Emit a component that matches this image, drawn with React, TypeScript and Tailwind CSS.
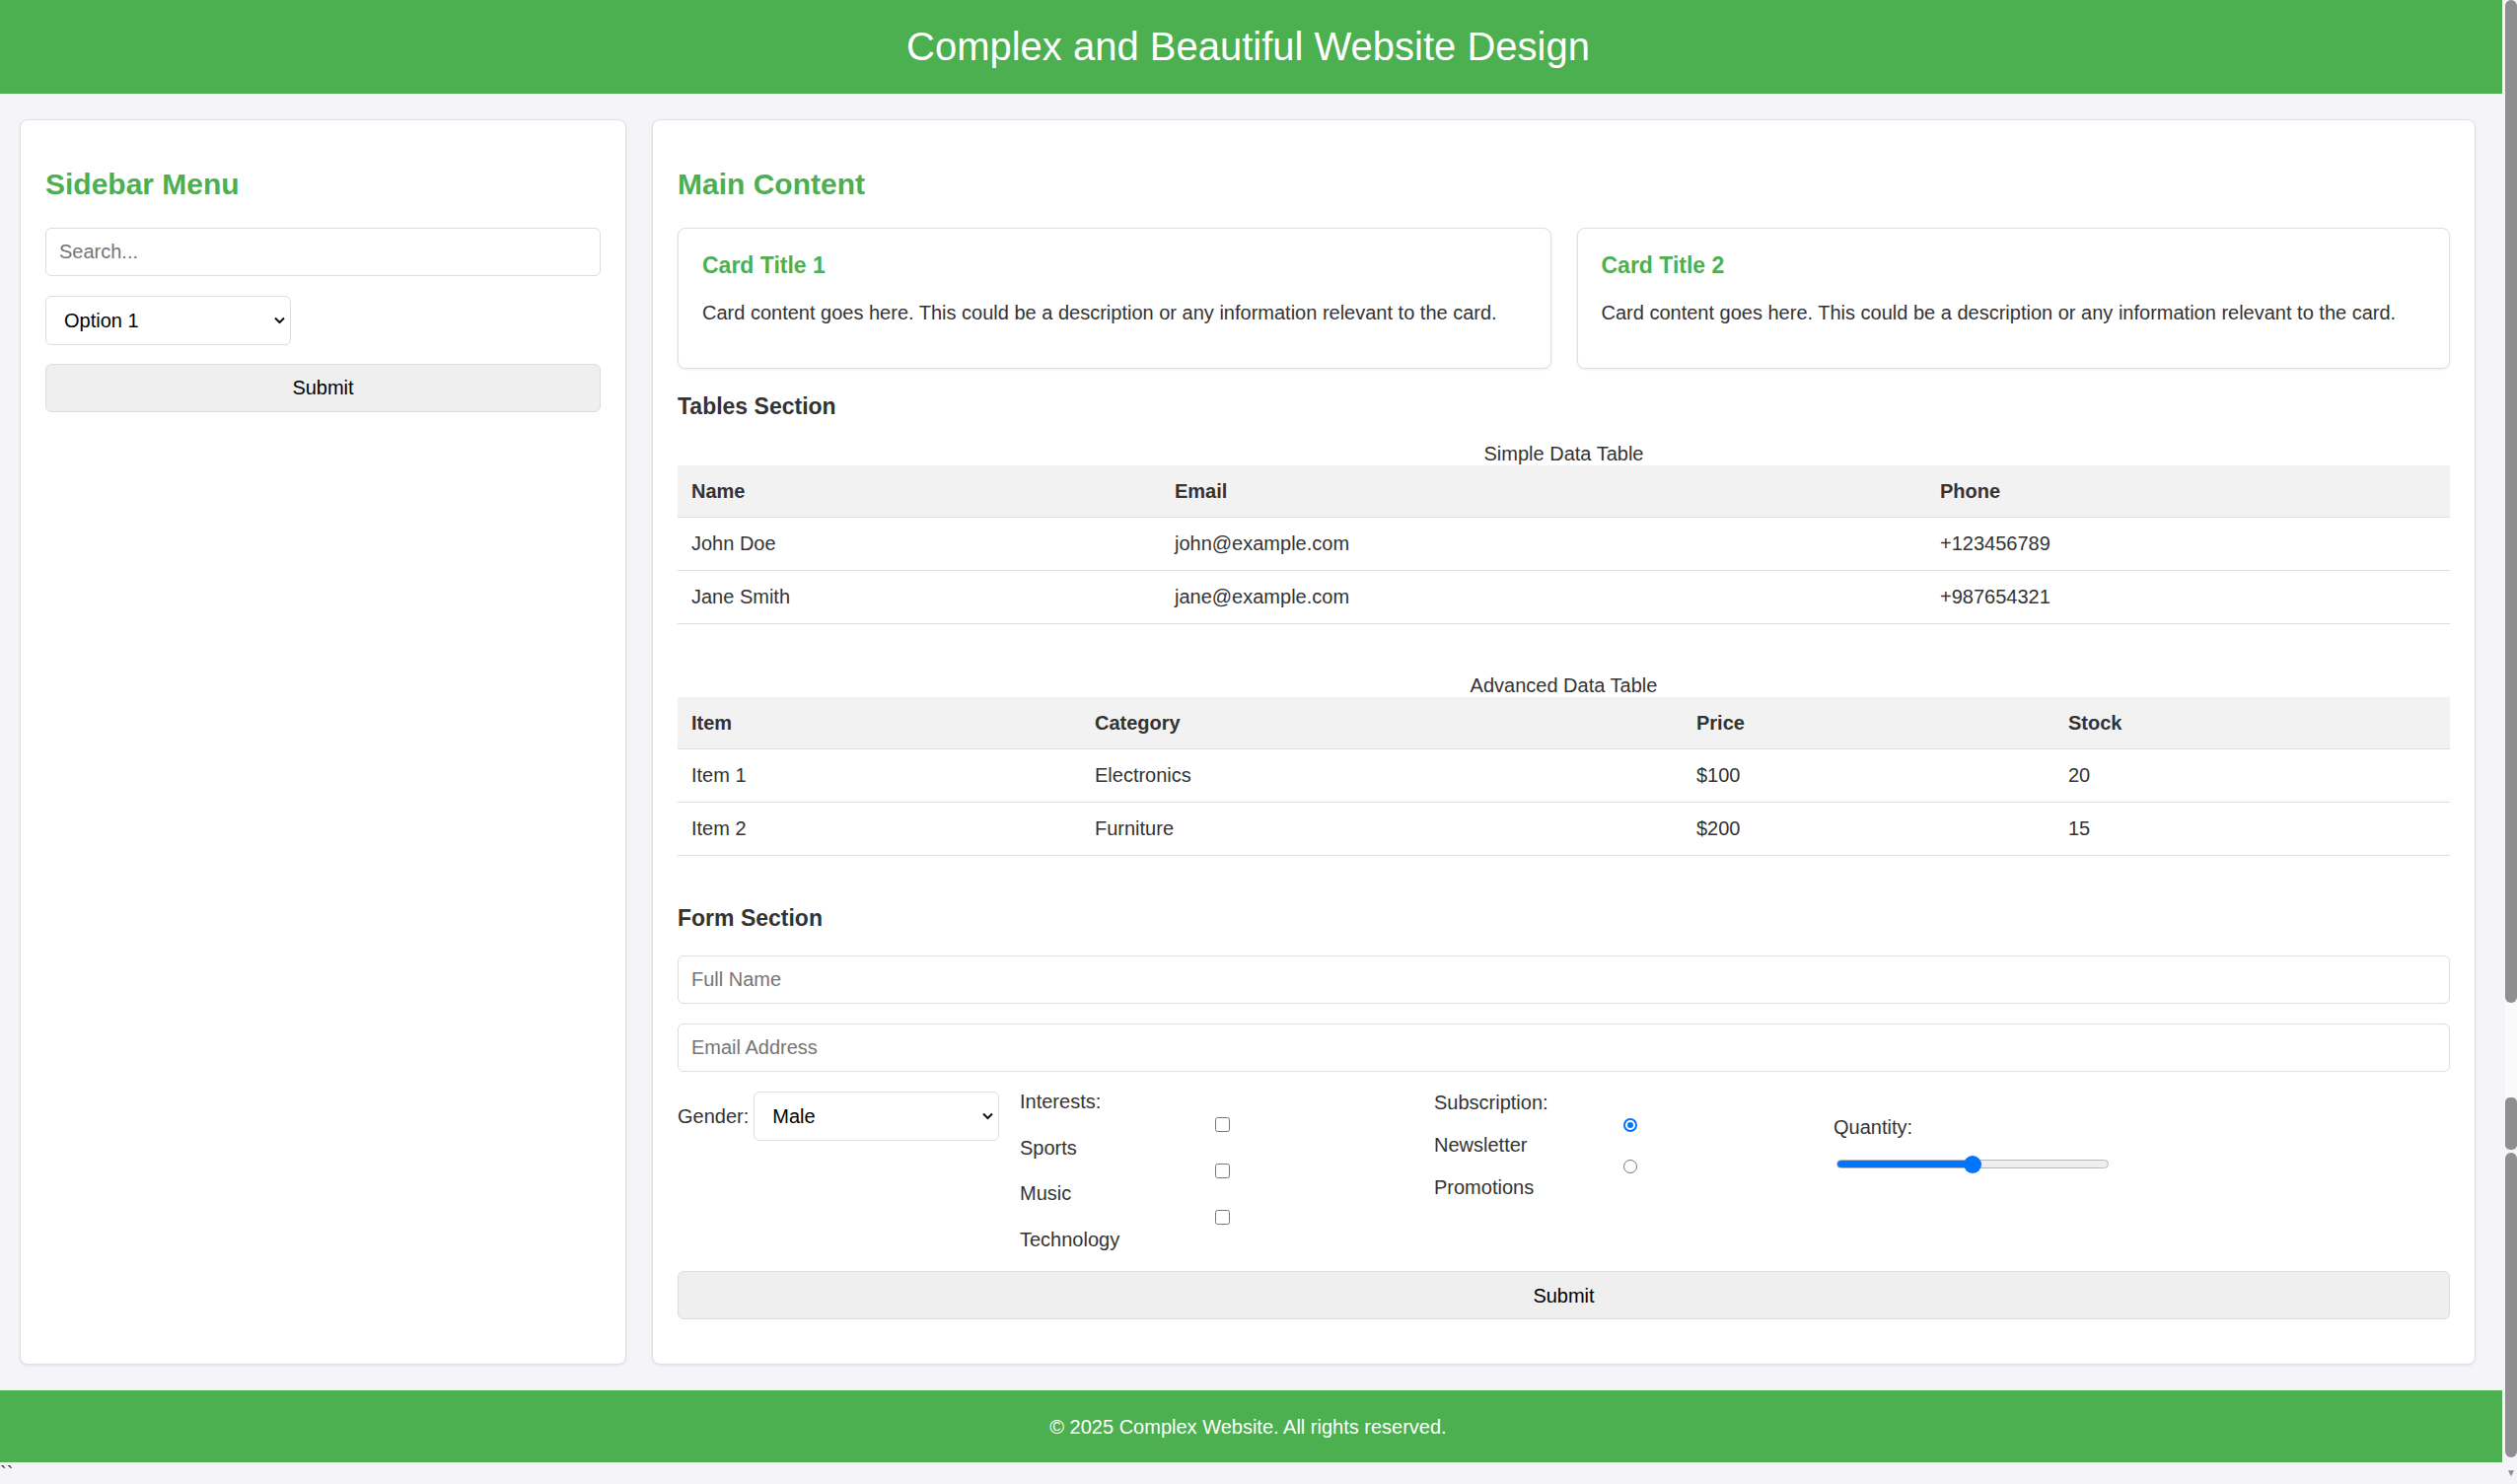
import React from 'react';

const inputCls =
  'block w-full h-[49px] rounded-[6px] border border-[#ddd] bg-white px-[13px] text-[20px] text-[#333] placeholder:text-[#757575] outline-none';

const Chevron: React.FC = () => (
  <svg
    className="pointer-events-none absolute right-[6px] top-1/2 -translate-y-1/2"
    width="11"
    height="7"
    viewBox="0 0 11 7"
    fill="none"
  >
    <path d="M1 1l4.5 4.5L10 1" stroke="#111" strokeWidth="2" />
  </svg>
);

const Select: React.FC<{ value: string; options: string[]; className: string }> = ({ value, options, className }) => (
  <div className={`relative ${className}`}>
    <select
      defaultValue={value}
      className="block h-full w-full appearance-none rounded-[6px] border border-[#ddd] bg-white pl-[18px] pr-[24px] text-[20px] text-black outline-none"
    >
      {options.map((o) => (
        <option key={o}>{o}</option>
      ))}
    </select>
    <Chevron />
  </div>
);

const Checkbox: React.FC = () => (
  <span className="block h-[15px] w-[15px] rounded-[2.5px] border border-[#767676] bg-white" />
);

const Radio: React.FC<{ checked?: boolean }> = ({ checked }) =>
  checked ? (
    <span className="flex h-[14px] w-[14px] items-center justify-center rounded-full border-2 border-[#0075ff] bg-white">
      <span className="h-[6px] w-[6px] rounded-full bg-[#0075ff]" />
    </span>
  ) : (
    <span className="block h-[14px] w-[14px] rounded-full border border-[#767676] bg-white" />
  );

const cardCls = 'rounded-[8px] border border-[#e0e0e0] bg-white shadow-[0_1px_3px_rgba(0,0,0,0.08)]';

const simpleRows = [
  ['John Doe', 'john@example.com', '+123456789'],
  ['Jane Smith', 'jane@example.com', '+987654321'],
];

const advancedRows = [
  ['Item 1', 'Electronics', '$100', '20'],
  ['Item 2', 'Furniture', '$200', '15'],
];

const DataTable: React.FC<{ caption: string; headers: string[]; widths: string[]; rows: string[][] }> = ({
  caption,
  headers,
  widths,
  rows,
}) => (
  <table className="w-full table-fixed border-collapse text-[20px]">
    <caption className="leading-[24px] text-[#333]">{caption}</caption>
    <colgroup>
      {widths.map((w, i) => (
        <col key={i} className={w} />
      ))}
    </colgroup>
    <thead>
      <tr className="bg-[#f2f2f2]">
        {headers.map((h) => (
          <th key={h} className="border-b border-[#ddd] px-[14px] py-[14px] text-left font-bold leading-[24px]">
            {h}
          </th>
        ))}
      </tr>
    </thead>
    <tbody>
      {rows.map((r) => (
        <tr key={r[0]}>
          {r.map((c, i) => (
            <td key={i} className="border-b border-[#ddd] px-[14px] py-[14px] leading-[25px]">
              {c}
            </td>
          ))}
        </tr>
      ))}
    </tbody>
  </table>
);

const Scrollbar: React.FC = () => (
  <div className="flex w-[15px] flex-col pl-[3px]">
    <div className="h-[1017px] rounded-[6px] bg-[#8f8f8f]" />
    <div className="h-[96px] bg-[#fafafa]" />
    <div className="h-[53px] rounded-[5px] bg-[#8f8f8f]" />
    <div className="mt-[3px] h-[309px] rounded-[6px] bg-[#8f8f8f]" />
    <div className="mt-[10px] flex justify-center text-[10px] leading-[12px] text-[#8f8f8f]">▼</div>
  </div>
);

const App: React.FC = () => {
  return (
    <div className="flex h-[1505px] w-[2552px] overflow-hidden bg-[#f4f4f9] font-['Liberation_Sans',Arial,sans-serif] text-[20px] text-[#333]">
      <div className="flex w-[2537px] flex-col">
        <header className="flex h-[95px] items-center justify-center bg-[#4caf50] pr-[6px]">
          <h1 className="text-[40px] leading-[46px] text-white">Complex and Beautiful Website Design</h1>
        </header>

        <div className="flex items-stretch gap-[26px] pl-[20px] pr-[27px] pt-[26px]">
          {/* Sidebar */}
          <aside className={`w-[615px] shrink-0 p-[25px] ${cardCls}`}>
            <h2 className="mt-[22px] mb-[27px] text-[30px] font-bold leading-[35px] text-[#4caf50]">Sidebar Menu</h2>
            <input type="text" placeholder="Search..." className={inputCls} />
            <Select value="Option 1" options={['Option 1', 'Option 2', 'Option 3']} className="mt-[20px] h-[50px] w-[249px]" />
            <button className="mt-[19px] block h-[49px] w-full rounded-[6px] border border-[#ddd] bg-[#efefef] text-[20px] text-black">
              Submit
            </button>
          </aside>

          {/* Main */}
          <main className={`min-w-0 flex-1 p-[25px] ${cardCls}`}>
            <h2 className="mt-[22px] mb-[27px] text-[30px] font-bold leading-[35px] text-[#4caf50]">Main Content</h2>

            <div className="grid grid-cols-2 gap-[26px]">
              {[1, 2].map((n) => (
                <div key={n} className={`px-[24px] pt-[24px] pb-[44px] ${cardCls}`}>
                  <h3 className="text-[23px] font-bold leading-[26px] text-[#4caf50]">Card Title {n}</h3>
                  <p className="mt-[23px] leading-[24px]">
                    Card content goes here. This could be a description or any information relevant to the card.
                  </p>
                </div>
              ))}
            </div>

            <h3 className="mt-[25px] mb-[22px] text-[23px] font-bold leading-[27px]">Tables Section</h3>
            <DataTable
              caption="Simple Data Table"
              headers={['Name', 'Email', 'Phone']}
              widths={['w-[490px]', 'w-[776px]', 'w-[531px]']}
              rows={simpleRows}
            />
            <div className="h-[50px]" />
            <DataTable
              caption="Advanced Data Table"
              headers={['Item', 'Category', 'Price', 'Stock']}
              widths={['w-[409px]', 'w-[610px]', 'w-[377px]', 'w-[401px]']}
              rows={advancedRows}
            />

            <h3 className="mt-[50px] mb-[24px] text-[23px] font-bold leading-[27px]">Form Section</h3>
            <input type="text" placeholder="Full Name" className={inputCls} />
            <input type="email" placeholder="Email Address" className={`mt-[20px] ${inputCls}`} />

            <div className="mt-[19px] flex items-start gap-[20px]">
              <div className="mt-[1px] flex w-[327px] shrink-0 items-center gap-[5px]">
                <span>Gender:</span>
                <Select value="Male" options={['Male', 'Female', 'Other']} className="h-[50px] w-[249px]" />
              </div>

              <div className="w-[400px] shrink-0 leading-[23.4px]">
                <div>Interests:</div>
                {['Sports', 'Music', 'Technology'].map((t) => (
                  <React.Fragment key={t}>
                    <div className="flex h-[23.4px] items-center pl-[198px]">
                      <Checkbox />
                    </div>
                    <div>{t}</div>
                  </React.Fragment>
                ))}
              </div>

              <div className="w-[385px] shrink-0">
                <div className="leading-[24px]">Subscription:</div>
                <div className="flex h-[22px] items-center pl-[192px]">
                  <Radio checked />
                </div>
                <div className="leading-[19px]">Newsletter</div>
                <div className="flex h-[24px] items-center pl-[192px]">
                  <Radio />
                </div>
                <div className="leading-[19px]">Promotions</div>
              </div>

              <div className="pt-[25px]">
                <div className="leading-[24px]">Quantity:</div>
                <div className="relative ml-[3px] mt-[16px] flex h-[20px] w-[276px] items-center">
                  <div className="flex h-[9px] w-full overflow-hidden rounded-full border border-[#b8b8b8] bg-[#efefef]">
                    <div className="h-full w-1/2 bg-[#0075ff]" />
                  </div>
                  <span className="absolute left-[129px] top-[1px] h-[18px] w-[18px] rounded-full bg-[#0075ff]" />
                </div>
              </div>
            </div>

            <button className="mt-[19.5px] mb-[20px] block h-[49px] w-full rounded-[6px] border border-[#ddd] bg-[#efefef] text-[20px] text-black">
              Submit
            </button>
          </main>
        </div>

        <footer className="mt-[26px] flex h-[73px] shrink-0 items-center justify-center bg-[#4caf50] pr-[6px] text-[20px] text-white">
          © 2025 Complex Website. All rights reserved.
        </footer>
        <div className="leading-[22px] text-[#333]">``</div>
      </div>
      <Scrollbar />
    </div>
  );
};

export default App;
